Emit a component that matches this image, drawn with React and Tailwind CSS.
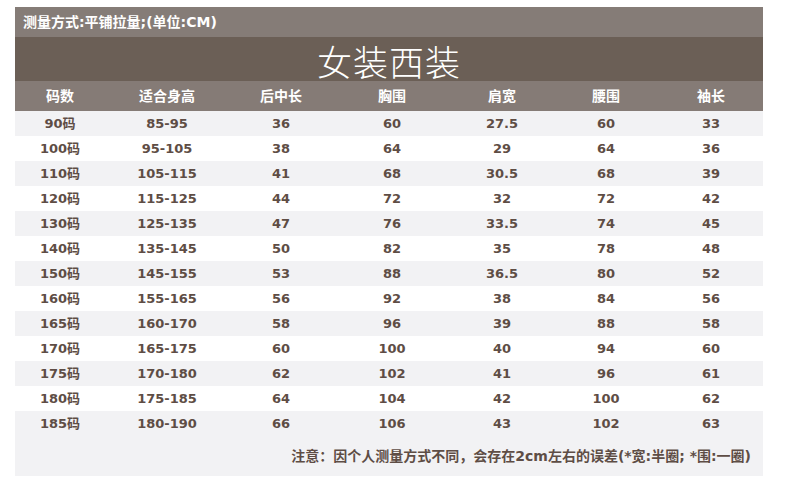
import React from 'react';

const rows = [
  ['90码', '85-95', '36', '60', '27.5', '60', '33'],
  ['100码', '95-105', '38', '64', '29', '64', '36'],
  ['110码', '105-115', '41', '68', '30.5', '68', '39'],
  ['120码', '115-125', '44', '72', '32', '72', '42'],
  ['130码', '125-135', '47', '76', '33.5', '74', '45'],
  ['140码', '135-145', '50', '82', '35', '78', '48'],
  ['150码', '145-155', '53', '88', '36.5', '80', '52'],
  ['160码', '155-165', '56', '92', '38', '84', '56'],
  ['165码', '160-170', '58', '96', '39', '88', '58'],
  ['170码', '165-175', '60', '100', '40', '94', '60'],
  ['175码', '170-180', '62', '102', '41', '96', '61'],
  ['180码', '175-185', '64', '104', '42', '100', '62'],
  ['185码', '180-190', '66', '106', '43', '102', '63'],
];

const headers = ['码数', '适合身高', '后中长', '胸围', '肩宽', '腰围', '袖长'];

const cols = 'grid grid-cols-[90px_124px_104px_118px_102px_106px_104px]';
const font = "font-['DejaVu_Sans','Noto_Sans_CJK_SC',sans-serif]";

export default function App() {
  return (
    <div className="w-[790px] h-[482px] bg-white pt-[7px] pl-[15px]">
      <div className={`w-[748px] ${font}`}>
        {/* measurement note */}
        <div className="h-[30px] bg-[#857c77] flex items-center pl-[8px] text-white text-[14px] font-bold">
          测量方式:平铺拉量;(单位:CM)
        </div>

        {/* title */}
        <div className="h-[44px] bg-[#6b5f56] flex items-center justify-center pt-[2px] text-white text-[35px] font-['Noto_Sans_CJK_SC',sans-serif] font-light tracking-[1px] leading-none">
          女装西装
        </div>

        {/* header */}
        <div className={`${cols} h-[30px] bg-[#857b76] text-white text-[14px] font-bold`}>
          {headers.map((h) => (
            <div key={h} className="flex items-center justify-center">{h}</div>
          ))}
        </div>

        {/* rows */}
        {rows.map((r, i) => (
          <div
            key={r[0]}
            className={`${cols} h-[25px] text-[13px] font-bold text-[#5e4d45] ${i % 2 === 0 ? 'bg-[#f2f2f4]' : 'bg-white'}`}
          >
            {r.map((c, j) => (
              <div key={j} className="flex items-center justify-center">{c}</div>
            ))}
          </div>
        ))}

        {/* footnote */}
        <div className="h-[40px] bg-[#f2f2f4] flex items-center justify-end pr-[12px] text-[14px] font-bold text-[#5e4d45]">
          注意：因个人测量方式不同，会存在2cm左右的误差(*宽:半圈; *围:一圈)
        </div>
      </div>
    </div>
  );
}
